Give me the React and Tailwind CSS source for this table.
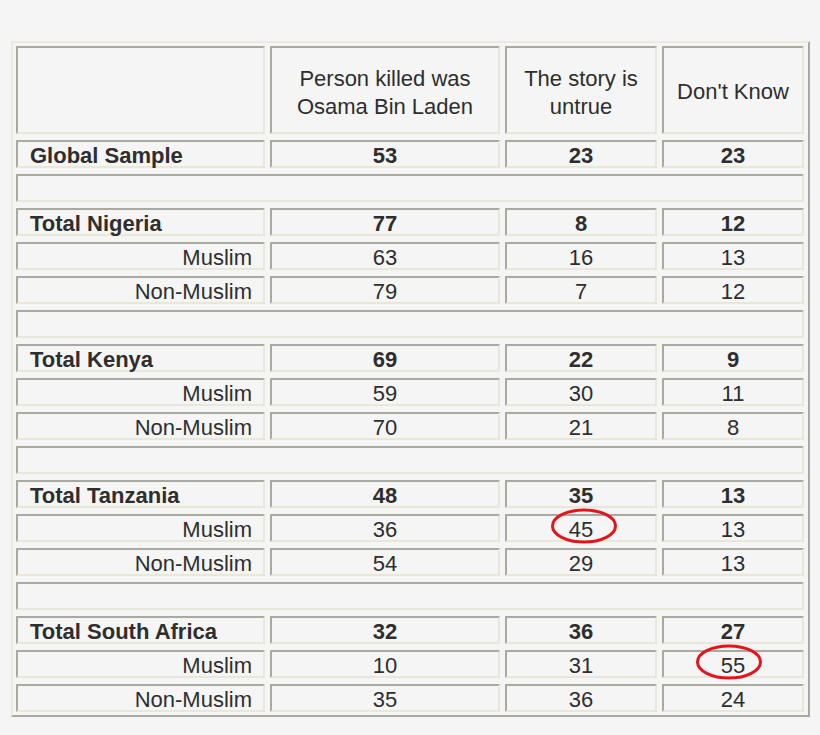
import React from "react";

const rows = [
  { label: "Global Sample", vals: ["53", "23", "23"], bold: true },
  { blank: true },
  { label: "Total Nigeria", vals: ["77", "8", "12"], bold: true },
  { label: "Muslim", vals: ["63", "16", "13"] },
  { label: "Non-Muslim", vals: ["79", "7", "12"] },
  { blank: true },
  { label: "Total Kenya", vals: ["69", "22", "9"], bold: true },
  { label: "Muslim", vals: ["59", "30", "11"] },
  { label: "Non-Muslim", vals: ["70", "21", "8"] },
  { blank: true },
  { label: "Total Tanzania", vals: ["48", "35", "13"], bold: true },
  { label: "Muslim", vals: ["36", "45", "13"], circle: 1 },
  { label: "Non-Muslim", vals: ["54", "29", "13"] },
  { blank: true },
  { label: "Total South Africa", vals: ["32", "36", "27"], bold: true },
  { label: "Muslim", vals: ["10", "31", "55"], circle: 2 },
  { label: "Non-Muslim", vals: ["35", "36", "24"] },
];

const cell =
  "border-[2px] border-t-[#aaa9a0] border-l-[#aaa9a0] border-b-[#e9e7da] border-r-[#e9e7da] bg-[#f5f5f5]";

function Ring({ className }) {
  return (
    <svg width="70" height="38" viewBox="0 0 70 38" className={"absolute pointer-events-none " + className}>
      <ellipse cx="35" cy="19" rx="31.5" ry="16" fill="none" stroke="#e3141b" strokeWidth="3" />
    </svg>
  );
}

export default function App() {
  return (
    <div
      className="h-[735px] bg-[#f5f5f5] pt-[41px] pl-[11px] text-[#2e2e2e]"
      style={{ fontFamily: '"Liberation Sans", Arial, sans-serif' }}
    >
      <div className="w-[799px] border-[2px] border-t-[#ebe9dc] border-l-[#ebe9dc] border-b-[#a9a89f] border-r-[#a9a89f] p-[3px]">
        <div className="grid grid-cols-[249px_230px_152px_142px] gap-x-[5px] gap-y-[6px] text-[22px]">
          <div className={cell + " h-[88px]"} />
          <div className={cell + " h-[88px] pt-[5px] flex items-center justify-center text-center leading-[28px]"}>
            Person killed was<br />Osama Bin Laden
          </div>
          <div className={cell + " h-[88px] pt-[5px] flex items-center justify-center text-center leading-[28px]"}>
            The story is<br />untrue
          </div>
          <div className={cell + " h-[88px] pt-[4px] flex items-center justify-center text-center leading-[28px]"}>
            Don't Know
          </div>

          {rows.map((r, i) =>
            r.blank ? (
              <div key={i} className={cell + " col-span-4 h-[28px]"} />
            ) : (
              <React.Fragment key={i}>
                <div
                  className={
                    cell +
                    " h-[28px] pt-[4px] flex items-center leading-none " +
                    (r.bold ? "font-bold justify-start pl-[12px]" : "justify-end pr-[11px]")
                  }
                >
                  {r.label}
                </div>
                {r.vals.map((v, j) => (
                  <div
                    key={j}
                    className={
                      cell +
                      " relative h-[28px] pt-[4px] flex items-center justify-center leading-none " +
                      (r.bold ? "font-bold" : "")
                    }
                  >
                    {v}
                    {r.circle === 1 && j === 1 && <Ring className="left-[42px] top-[-9px]" />}
                    {r.circle === 2 && j === 2 && <Ring className="left-[30px] top-[-9px]" />}
                  </div>
                ))}
              </React.Fragment>
            )
          )}
        </div>
      </div>
    </div>
  );
}
